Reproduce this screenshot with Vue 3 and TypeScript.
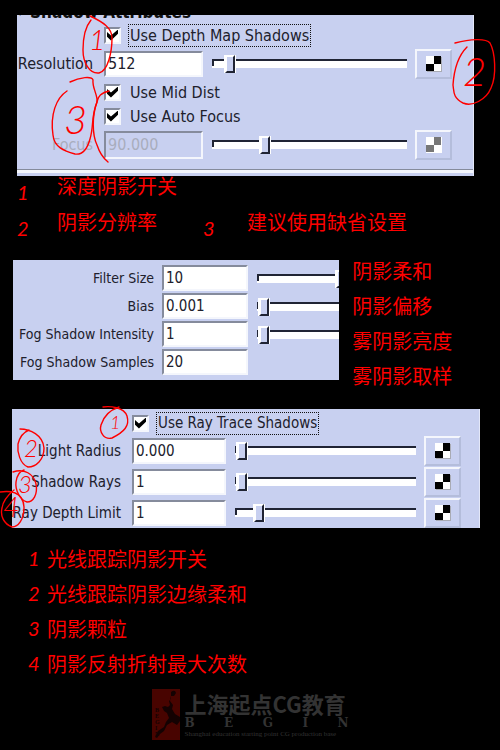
<script setup lang="ts">
import { reactive } from 'vue'

interface Field {
  id: string
  label: string
  value: string
  slider?: number
  disabled?: boolean
}

const depth = reactive({ enabled: true, midDist: true, autoFocus: true })
const resolution = reactive<Field>({ id: 'resolution', label: 'Resolution', value: '512', slider: 7 })
const focus = reactive<Field>({ id: 'focus', label: 'Focus', value: '90.000', slider: 26, disabled: true })

const filters = reactive<Field[]>([
  { id: 'filter-size', label: 'Filter Size', value: '10', slider: 46 },
  { id: 'bias', label: 'Bias', value: '0.001', slider: 1 },
  { id: 'fog-intensity', label: 'Fog Shadow Intensity', value: '1', slider: 1 },
  { id: 'fog-samples', label: 'Fog Shadow Samples', value: '20' },
])
const filterNotes = ['阴影柔和', '阴影偏移', '雾阴影亮度', '雾阴影取样']

const ray = reactive({ enabled: true })
const rayFields = reactive<Field[]>([
  { id: 'light-radius', label: 'Light Radius', value: '0.000', slider: 1 },
  { id: 'shadow-rays', label: 'Shadow Rays', value: '1', slider: 1 },
  { id: 'ray-depth', label: 'Ray Depth Limit', value: '1', slider: 11 },
])
const rayNotes = ['光线跟踪阴影开关', '光线跟踪阴影边缘柔和', '阴影颗粒', '阴影反射折射最大次数']
</script>

<template>
  <main class="page">
    <section class="block depth">
      <div class="panel">
        <h2 class="title"><span class="arrow">▼</span>Shadow Attributes</h2>
        <div class="row check-row">
          <label class="check focused"><input v-model="depth.enabled" type="checkbox" /><span>Use Depth Map Shadows</span></label>
        </div>
        <div class="row tall">
          <label class="name" :for="resolution.id">{{ resolution.label }}</label>
          <input :id="resolution.id" v-model="resolution.value" class="field" type="text" />
          <input v-model.number="resolution.slider" class="slider" type="range" aria-label="Resolution slider" />
          <button class="map" type="button" aria-label="Map resolution">
            <svg viewBox="0 0 16 16"><path class="sq-shade" d="M1 1h15v15H1z" /><path class="sq-light" d="M0 0h15v15H0z" /><path class="sq-dark" d="M8 0h7v8H8zM0 8h8v7H0z" /></svg>
          </button>
        </div>
        <div class="row check-row">
          <label class="check"><input v-model="depth.midDist" type="checkbox" /><span>Use Mid Dist</span></label>
        </div>
        <div class="row check-row">
          <label class="check"><input v-model="depth.autoFocus" type="checkbox" /><span>Use Auto Focus</span></label>
        </div>
        <div class="row tall off">
          <label class="name" :for="focus.id">{{ focus.label }}</label>
          <input :id="focus.id" v-model="focus.value" class="field" type="text" disabled />
          <input v-model.number="focus.slider" class="slider" type="range" disabled aria-label="Focus slider" />
          <button class="map" type="button" disabled aria-label="Map focus">
            <svg viewBox="0 0 16 16"><path class="sq-light" d="M0 0h16v16H0z" /><path class="sq-dark" d="M8 0h7v8H8zM0 8h8v7H0z" /></svg>
          </button>
        </div>
        <hr class="rule" />
      </div>
      <svg class="marks" viewBox="0 0 500 180">
        <path d="M90 16C103 22 112 28 112 38C112 52 108 71 99 73C89 74 83 62 83 50C83 36 86 26 91 20" />
        <path d="M70 82C80 77 92 76 93 80C92 88 98 95 97 102C91 116 94 126 90 139C87 150 82 155 75 154C64 151 54 147 53 135C50 115 56 98 67 91" />
        <path d="M109 91C101 93 98 96 97 102C92 116 92 134 97 145C99 151 103 158 108 162" />
        <path d="M455 43C470 39 486 38 490 43C495 52 497 75 491 88C486 100 472 107 463 103C453 98 454 92 453 85C454 70 458 56 467 47" />
        <text class="digit-xl" x="64" y="134">3</text>
        <text class="digit-l" x="89" y="50">1</text>
        <text class="digit-xl" x="463" y="86">2</text>
      </svg>
    </section>

    <div class="legend">
      <span class="num">1</span><span class="note">深度阴影开关</span>
      <span class="num">2</span><span class="note">阴影分辨率</span>
      <span class="num">3</span><span class="note">建议使用缺省设置</span>
    </div>

    <section class="filters">
      <div class="panel">
        <div v-for="f in filters" :key="f.id" class="row">
          <label class="name" :for="f.id">{{ f.label }}</label>
          <input :id="f.id" v-model="f.value" class="field" type="text" />
          <input v-if="f.slider !== undefined" v-model.number="f.slider" class="slider" type="range" :aria-label="f.label + ' slider'" />
        </div>
      </div>
      <ul class="side">
        <li v-for="n in filterNotes" :key="n">{{ n }}</li>
      </ul>
    </section>

    <section class="block ray">
      <div class="panel">
        <div class="row check-row">
          <label class="check focused"><input v-model="ray.enabled" type="checkbox" /><span>Use Ray Trace Shadows</span></label>
        </div>
        <div v-for="f in rayFields" :key="f.id" class="row tall">
          <label class="name" :for="f.id">{{ f.label }}</label>
          <input :id="f.id" v-model="f.value" class="field" type="text" />
          <input v-model.number="f.slider" class="slider" type="range" :aria-label="f.label + ' slider'" />
          <button class="map" type="button" :aria-label="'Map ' + f.label">
            <svg viewBox="0 0 16 16"><path class="sq-shade" d="M1 1h15v15H1z" /><path class="sq-light" d="M0 0h15v15H0z" /><path class="sq-dark" d="M8 0h7v8H8zM0 8h8v7H0z" /></svg>
          </button>
        </div>
      </div>
      <svg class="marks" viewBox="0 400 500 130">
        <path d="M103 407C110 406 124 407 127 416C130 426 124 432 112 438C104 440 99 432 101 425C104 415 110 410 119 407" />
        <path d="M20 429C30 429 43 435 44 448C44 460 36 467 28 467C20 464 17 452 18 444C20 436 24 432 29 430" />
        <path d="M13 472C24 468 34 474 36 484C38 495 33 502 27 502C20 500 15 490 16 482C17 475 20 471 24 470" />
        <path d="M0 492C8 491 23 490 24 507C24 520 18 527 12 527C4 524 0 516 2 508C3 500 8 495 14 490" />
        <text class="digit-s" x="110" y="429">1</text>
        <text class="digit-m" x="24" y="457">2</text>
        <text class="digit-m" x="18" y="493">3</text>
        <text class="digit-l" x="3" y="517">4</text>
      </svg>
    </section>

    <ol class="list">
      <li v-for="(n, i) in rayNotes" :key="n"><span class="num">{{ i + 1 }}</span><span>{{ n }}</span></li>
    </ol>

    <footer class="brand">
      <svg class="seal" viewBox="0 0 28 51">
        <path class="seal-bg" d="M0 0h28v51H0z" />
        <path class="seal-ink" d="M19 3q4-3 5 1l-2 3-3 0-1 5 3 4-1 4 3 5 5 3v4l-3 4-5-3-5 3-3 6-4 3-3 4-2-1 3-6 6-4 2-5 3-4-2-5-3-2-2-4 3-1 3 1 2-2-1-4 2-2z" />
        <text x="3" y="23">B</text><text x="3" y="29">E</text><text x="3" y="35">G</text><text x="3" y="41">I</text><text x="3" y="47">N</text>
      </svg>
      <div class="words">
        <div class="cn">上海起点CG教育</div>
        <div class="begin"><span>B</span><span>E</span><span>G</span><span>I</span><span>N</span></div>
        <div class="en">Shanghai education starting point CG production base</div>
      </div>
    </footer>
  </main>
</template>

<style>
body {
  margin: 0;
  background: #000;
}
</style>

<style scoped>
* {
  box-sizing: border-box;
}
.page {
  min-height: 100vh;
  overflow: hidden;
  background: #000;
  color: #f00;
  font-family: "Noto Sans CJK SC", sans-serif;
  font-size: 20px;
}
.block {
  position: relative;
}
.depth {
  padding: 15px 26px 0 17px;
}
.panel {
  background: #c8d0f0;
  color: #20202c;
  font-family: "DejaVu Sans Condensed", "DejaVu Sans", sans-serif;
  font-size: 15px;
  border-right: 1px solid #e4e8f8;
}
.depth .panel {
  --name: 76px;
  --gap: 11px;
  --field: 99px;
  padding-right: 21px;
  overflow: hidden;
  font-size: 16px;
}
.title {
  display: flex;
  align-items: flex-end;
  height: 4px;
  margin: 0 0 4px;
  font-size: 17px;
  line-height: 14px;
  color: #111;
  white-space: nowrap;
}
.arrow {
  width: 13px;
  font-size: 9px;
}
.row {
  display: flex;
  align-items: center;
  height: 28px;
}
.row.tall {
  height: 31px;
}
.name {
  flex: none;
  width: var(--name);
  margin-right: var(--gap);
  display: flex;
  justify-content: flex-end;
  white-space: nowrap;
}
.field {
  flex: none;
  width: var(--field);
  height: 26px;
  margin: 0 9px 0 0;
  padding: 0 2px;
  border: 2px solid;
  border-color: #858b9c #f4f6fc #f4f6fc #858b9c;
  background: #fff;
  color: #20202c;
  font: inherit;
}
.check-row {
  height: 24px;
  padding-left: calc(var(--name) + var(--gap));
}
.check {
  display: flex;
  align-items: center;
  gap: 7px;
  white-space: nowrap;
}
.check span {
  padding: 0 1px;
  line-height: 21px;
  border: 1px dotted transparent;
}
.check.focused span {
  border-color: #111;
}
.check input {
  appearance: none;
  width: 17px;
  height: 17px;
  margin: 0;
  border: 2px solid;
  border-color: #858b9c #f4f6fc #f4f6fc #858b9c;
  background: #fff;
}
.check input:checked::before {
  content: "";
  display: block;
  width: 11px;
  height: 11px;
  margin: 1px;
  background: #000;
  clip-path: polygon(0 22%, 36% 54%, 100% 0, 100% 38%, 36% 100%, 0 66%);
}
.slider {
  appearance: none;
  flex: 1;
  min-width: 0;
  height: 20px;
  margin: 0;
  background: transparent;
}
.slider::-webkit-slider-runnable-track {
  height: 9px;
  border-top: 2px solid #202434;
  background: linear-gradient(#202434, #202434) 0 0 / 2px 5px no-repeat, #fff;
}
.slider::-webkit-slider-thumb {
  appearance: none;
  width: 10px;
  height: 18px;
  margin-top: -6px;
  border: 2px solid;
  border-color: #fff #202434 #202434 #fff;
  background: #c8d0f0;
  box-shadow: -1px 0 #fff, 1px 0 #fff;
}
.map {
  flex: none;
  display: grid;
  place-items: center;
  width: 37px;
  height: 30px;
  margin: 0 0 0 8px;
  padding: 0;
  border: 2px solid;
  border-color: #f4f6fc #b4bddb #b4bddb #f4f6fc;
  background: #c8d0f0;
}
.map svg {
  width: 16px;
  height: 16px;
}
.sq-shade {
  fill: #a9abb4;
}
.sq-light {
  fill: #fff;
}
.sq-dark {
  fill: #000;
}
.off .sq-dark {
  fill: #777;
}
.off .name,
.off .field {
  color: #a8adbd;
}
.off .field {
  height: 28px;
  background: #c8d0f0;
}
.depth .tall {
  height: 33px;
}
.rule {
  height: 4px;
  margin: 8px -21px 3px 0;
  border: 0;
  border-top: 1px solid #858b9c;
  background: #f4f6fc;
}
.marks {
  position: absolute;
  top: 0;
  left: 0;
  width: 100%;
  overflow: visible;
  pointer-events: none;
}
.marks path {
  fill: none;
  stroke: #f00;
  stroke-width: 1.4;
  stroke-linecap: round;
}
.marks text {
  fill: #f00;
  font-family: Lato, sans-serif;
  font-style: italic;
  font-weight: 300;
}
.marks .digit-s {
  font-size: 18px;
}
.marks .digit-m {
  font-size: 24px;
}
.marks .digit-l {
  font-size: 28px;
}
.marks .digit-xl {
  font-size: 40px;
}
.num {
  font-family: Lato, sans-serif;
  font-style: italic;
}
.legend {
  display: grid;
  grid-template-columns: 40px 146px 44px 1fr;
  row-gap: 16px;
  padding: 0 17px;
  line-height: 20px;
}
.legend .num {
  padding-top: 6px;
  height: 20px;
}
.legend .note:nth-child(2) {
  grid-column: 2 / -1;
}
.filters {
  display: flex;
  align-items: flex-start;
  margin-top: 21px;
  padding-left: 13px;
}
.filters .panel {
  --name: 141px;
  --gap: 8px;
  --field: 86px;
  flex: 0 0 67%;
  margin-top: 7px;
  padding: 4px 0;
  overflow: hidden;
  border: 0;
  font-size: 14px;
}
.filters .slider {
  flex: none;
  width: 182px;
}
.filters .field {
  font-size: 15px;
}
.side {
  margin: 0;
  padding: 0 0 0 13px;
  list-style: none;
  line-height: 35px;
  white-space: nowrap;
}
.ray {
  margin-top: 7px;
  padding: 9px 20px 0 12px;
}
.ray .panel {
  --name: 109px;
  --gap: 11px;
  --field: 94px;
  padding: 2px 18px 0 0;
}
.list {
  margin: 0;
  padding: 13px 0 0 28px;
  list-style: none;
  line-height: 35px;
}
.list li {
  display: flex;
}
.list .num {
  width: 19px;
}
.brand {
  display: flex;
  justify-content: center;
  gap: 5px;
  padding-top: 8px;
  color: #333;
}
.seal {
  width: 28px;
  height: 51px;
}
.seal-bg {
  fill: #480400;
}
.seal-ink {
  fill: #140202;
}
.seal text {
  fill: #140202;
  font: bold 6px "Liberation Serif", serif;
}
.words {
  width: 164px;
}
.cn {
  font-size: 22px;
  line-height: 28px;
  font-weight: bold;
  white-space: nowrap;
}
.begin {
  display: flex;
  justify-content: space-between;
  font: bold 12px/12px "DejaVu Serif", serif;
}
.en {
  font: 7px/11px "Liberation Serif", serif;
  white-space: nowrap;
}
</style>
